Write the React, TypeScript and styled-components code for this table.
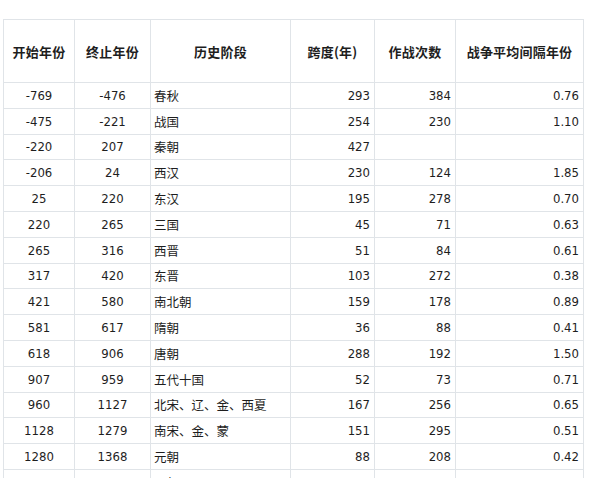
import React from 'react';
import styled, { createGlobalStyle } from 'styled-components';

const GlobalStyle = createGlobalStyle`
  html, body {
    margin: 0;
    padding: 0;
    background: #ffffff;
  }
  body {
    width: 600px;
    height: 478px;
    overflow: hidden;
  }
`;

const COLUMNS = '71px 76px 140px 84px 81px 128px';
const LINE = '#e0e4e8';

type Align = 'center' | 'left' | 'right';

const Page = styled.div`
  width: 600px;
  height: 478px;
  overflow: hidden;
  padding: 19px 0 0 3px;
  box-sizing: border-box;
  background: #fff;
`;

const Sheet = styled.div`
  width: 581px;
  border-top: 1px solid ${LINE};
  border-left: 1px solid ${LINE};
  box-sizing: border-box;
`;

const Row = styled.div<{ $header?: boolean }>`
  display: grid;
  grid-template-columns: ${COLUMNS};
  height: ${(p) => (p.$header ? '63px' : '25.8px')};
  box-sizing: border-box;
`;

const Cell = styled.div<{ $align: Align; $header?: boolean }>`
  display: flex;
  align-items: center;
  justify-content: ${(p) =>
    p.$align === 'left' ? 'flex-start' : p.$align === 'right' ? 'flex-end' : 'center'};
  padding: ${(p) => (p.$align === 'left' ? '0 0 0 3px' : p.$align === 'right' ? '0 4px 0 0' : '0')};
  border-right: 1px solid ${LINE};
  border-bottom: 1px solid ${LINE};
  box-sizing: border-box;
  overflow: hidden;
  white-space: nowrap;
  color: #1e1e1e;
  font-family: ${(p) =>
    p.$header
      ? '"Noto Sans CJK SC", sans-serif'
      : '"DejaVu Sans Condensed", "DejaVu Sans", "Noto Sans CJK SC", sans-serif'};
  font-size: 13px;
  font-weight: ${(p) => (p.$header ? 700 : 400)};
  letter-spacing: ${(p) => (p.$header ? '0.2px' : '0')};
`;

const CjkText = styled.span`
  font-family: "Noto Sans CJK SC", sans-serif;
  font-size: 12.5px;
`;

const headers = ['开始年份', '终止年份', '历史阶段', '跨度(年)', '作战次数', '战争平均间隔年份'];

const rows: string[][] = [
  ['-769', '-476', '春秋', '293', '384', '0.76'],
  ['-475', '-221', '战国', '254', '230', '1.10'],
  ['-220', '207', '秦朝', '427', '', ''],
  ['-206', '24', '西汉', '230', '124', '1.85'],
  ['25', '220', '东汉', '195', '278', '0.70'],
  ['220', '265', '三国', '45', '71', '0.63'],
  ['265', '316', '西晋', '51', '84', '0.61'],
  ['317', '420', '东晋', '103', '272', '0.38'],
  ['421', '580', '南北朝', '159', '178', '0.89'],
  ['581', '617', '隋朝', '36', '88', '0.41'],
  ['618', '906', '唐朝', '288', '192', '1.50'],
  ['907', '959', '五代十国', '52', '73', '0.71'],
  ['960', '1127', '北宋、辽、金、西夏', '167', '256', '0.65'],
  ['1128', '1279', '南宋、金、蒙', '151', '295', '0.51'],
  ['1280', '1368', '元朝', '88', '208', '0.42'],
  ['1368', '1644', '明朝', '276', '579', '0.48'],
];

const aligns: Align[] = ['center', 'center', 'left', 'right', 'right', 'right'];

export default function App() {
  return (
    <>
      <GlobalStyle />
      <Page>
        <Sheet>
          <Row $header>
            {headers.map((h) => (
              <Cell key={h} $align="center" $header>
                {h}
              </Cell>
            ))}
          </Row>
          {rows.map((r, idx) => (
            <Row key={idx}>
              {r.map((v, i) => (
                <Cell key={i} $align={aligns[i]}>
                  {i === 2 ? <CjkText>{v}</CjkText> : v}
                </Cell>
              ))}
            </Row>
          ))}
        </Sheet>
      </Page>
    </>
  );
}
